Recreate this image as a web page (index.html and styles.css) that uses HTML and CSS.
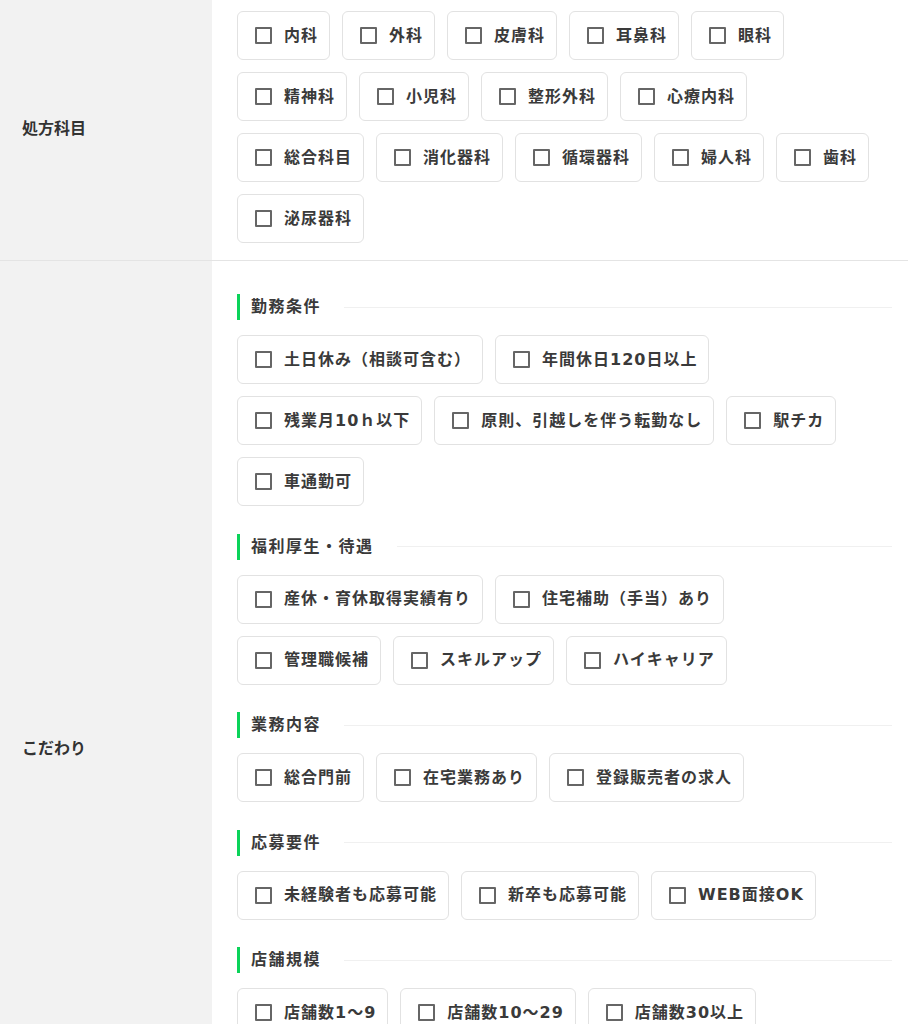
FILE: index.html
```html
<!DOCTYPE html>
<html lang="ja">
<head>
<meta charset="utf-8">
<title>検索条件</title>
<link rel="stylesheet" href="styles.css">
</head>
<body>
<div class="form">
  <div class="row">
    <div class="label">処方科目</div>
    <div class="field">
      <div class="chips">
        <label class="chip"><span class="box"></span><span class="txt">内科</span></label>
        <label class="chip"><span class="box"></span><span class="txt">外科</span></label>
        <label class="chip"><span class="box"></span><span class="txt">皮膚科</span></label>
        <label class="chip"><span class="box"></span><span class="txt">耳鼻科</span></label>
        <label class="chip"><span class="box"></span><span class="txt">眼科</span></label>
        <label class="chip"><span class="box"></span><span class="txt">精神科</span></label>
        <label class="chip"><span class="box"></span><span class="txt">小児科</span></label>
        <label class="chip"><span class="box"></span><span class="txt">整形外科</span></label>
        <label class="chip"><span class="box"></span><span class="txt">心療内科</span></label>
        <label class="chip"><span class="box"></span><span class="txt">総合科目</span></label>
        <label class="chip"><span class="box"></span><span class="txt">消化器科</span></label>
        <label class="chip"><span class="box"></span><span class="txt">循環器科</span></label>
        <label class="chip"><span class="box"></span><span class="txt">婦人科</span></label>
        <label class="chip"><span class="box"></span><span class="txt">歯科</span></label>
        <label class="chip"><span class="box"></span><span class="txt">泌尿器科</span></label>
      </div>
    </div>
  </div>
  <div class="row">
    <div class="label">こだわり</div>
    <div class="field">
      <div class="group">
        <div class="group-head"><span class="title">勤務条件</span></div>
        <div class="chips">
          <label class="chip"><span class="box"></span><span class="txt">土日休み（相談可含む）</span></label>
          <label class="chip"><span class="box"></span><span class="txt">年間休日120日以上</span></label>
          <label class="chip"><span class="box"></span><span class="txt">残業月10ｈ以下</span></label>
          <label class="chip"><span class="box"></span><span class="txt">原則、引越しを伴う転勤なし</span></label>
          <label class="chip"><span class="box"></span><span class="txt">駅チカ</span></label>
          <label class="chip"><span class="box"></span><span class="txt">車通勤可</span></label>
        </div>
      </div>
      <div class="group">
        <div class="group-head"><span class="title">福利厚生・待遇</span></div>
        <div class="chips">
          <label class="chip"><span class="box"></span><span class="txt">産休・育休取得実績有り</span></label>
          <label class="chip"><span class="box"></span><span class="txt">住宅補助（手当）あり</span></label>
          <label class="chip"><span class="box"></span><span class="txt">管理職候補</span></label>
          <label class="chip"><span class="box"></span><span class="txt">スキルアップ</span></label>
          <label class="chip"><span class="box"></span><span class="txt">ハイキャリア</span></label>
        </div>
      </div>
      <div class="group">
        <div class="group-head"><span class="title">業務内容</span></div>
        <div class="chips">
          <label class="chip"><span class="box"></span><span class="txt">総合門前</span></label>
          <label class="chip"><span class="box"></span><span class="txt">在宅業務あり</span></label>
          <label class="chip"><span class="box"></span><span class="txt">登録販売者の求人</span></label>
        </div>
      </div>
      <div class="group">
        <div class="group-head"><span class="title">応募要件</span></div>
        <div class="chips">
          <label class="chip"><span class="box"></span><span class="txt">未経験者も応募可能</span></label>
          <label class="chip"><span class="box"></span><span class="txt">新卒も応募可能</span></label>
          <label class="chip"><span class="box"></span><span class="txt">WEB面接OK</span></label>
        </div>
      </div>
      <div class="group">
        <div class="group-head"><span class="title">店舗規模</span></div>
        <div class="chips">
          <label class="chip"><span class="box"></span><span class="txt">店舗数1〜9</span></label>
          <label class="chip"><span class="box"></span><span class="txt">店舗数10〜29</span></label>
          <label class="chip"><span class="box"></span><span class="txt">店舗数30以上</span></label>
        </div>
      </div>
      <div class="group">
        <div class="group-head"><span class="title">その他</span></div>
        <div class="chips">
          <label class="chip"><span class="box"></span><span class="txt">年収600万円以上</span></label>
          <label class="chip"><span class="box"></span><span class="txt">退職金制度あり</span></label>
          <label class="chip"><span class="box"></span><span class="txt">研修制度充実</span></label>
          <label class="chip"><span class="box"></span><span class="txt">ブランク可</span></label>
          <label class="chip"><span class="box"></span><span class="txt">扶養内勤務可</span></label>
        </div>
      </div>
    </div>
  </div>
</div>
</body>
</html>
```

FILE: styles.css
```css
html, body {
  margin: 0;
  padding: 0;
  background: #ffffff;
}

body {
  font-family: "DejaVu Sans", "Noto Sans CJK JP", sans-serif;
  color: #333333;
  overflow: hidden;
}

.form {
  margin-top: -6px;
}

.row {
  display: flex;
  border-bottom: 1px solid #e4e4e4;
}

.label {
  width: 212px;
  flex: 0 0 212px;
  box-sizing: border-box;
  padding-left: 22px;
  background: #f2f2f2;
  display: flex;
  align-items: center;
  font-size: 16px;
  font-weight: 700;
  color: #333333;
}

.field {
  flex: 1;
  min-width: 0;
  padding: 17px 16px 17px 25px;
}

.chips {
  display: flex;
  flex-wrap: wrap;
  row-gap: 12px;
  margin-right: 6px;
}

.chip {
  box-sizing: border-box;
  height: 49px;
  display: inline-flex;
  align-items: center;
  margin-right: 12px;
  padding: 0 11px 0 17px;
  border: 1px solid #e2e2e2;
  border-radius: 6px;
  background: #ffffff;
  cursor: pointer;
}

.box {
  box-sizing: border-box;
  width: 17px;
  height: 17px;
  border: 2px solid #666666;
  border-radius: 1px;
  margin-right: 12px;
  flex: 0 0 17px;
}

.txt {
  font-size: 16px;
  line-height: 20px;
  font-weight: 700;
  letter-spacing: 1px;
  color: #3a3a3a;
  white-space: nowrap;
}

.group {
  margin-top: 27.5px;
}

.group:first-child {
  margin-top: 16px;
}

.group-head {
  display: flex;
  align-items: center;
  height: 26px;
  margin-bottom: 15px;
}

.group-head::after {
  content: "";
  flex: 1;
  height: 1px;
  background: #f0f0f0;
  margin-left: 23px;
}

.title {
  display: block;
  height: 26px;
  line-height: 26px;
  border-left: 3px solid #0bd35a;
  padding-left: 11px;
  font-size: 16px;
  font-weight: 700;
  letter-spacing: 1.5px;
  color: #3a3a3a;
  white-space: nowrap;
}
```
